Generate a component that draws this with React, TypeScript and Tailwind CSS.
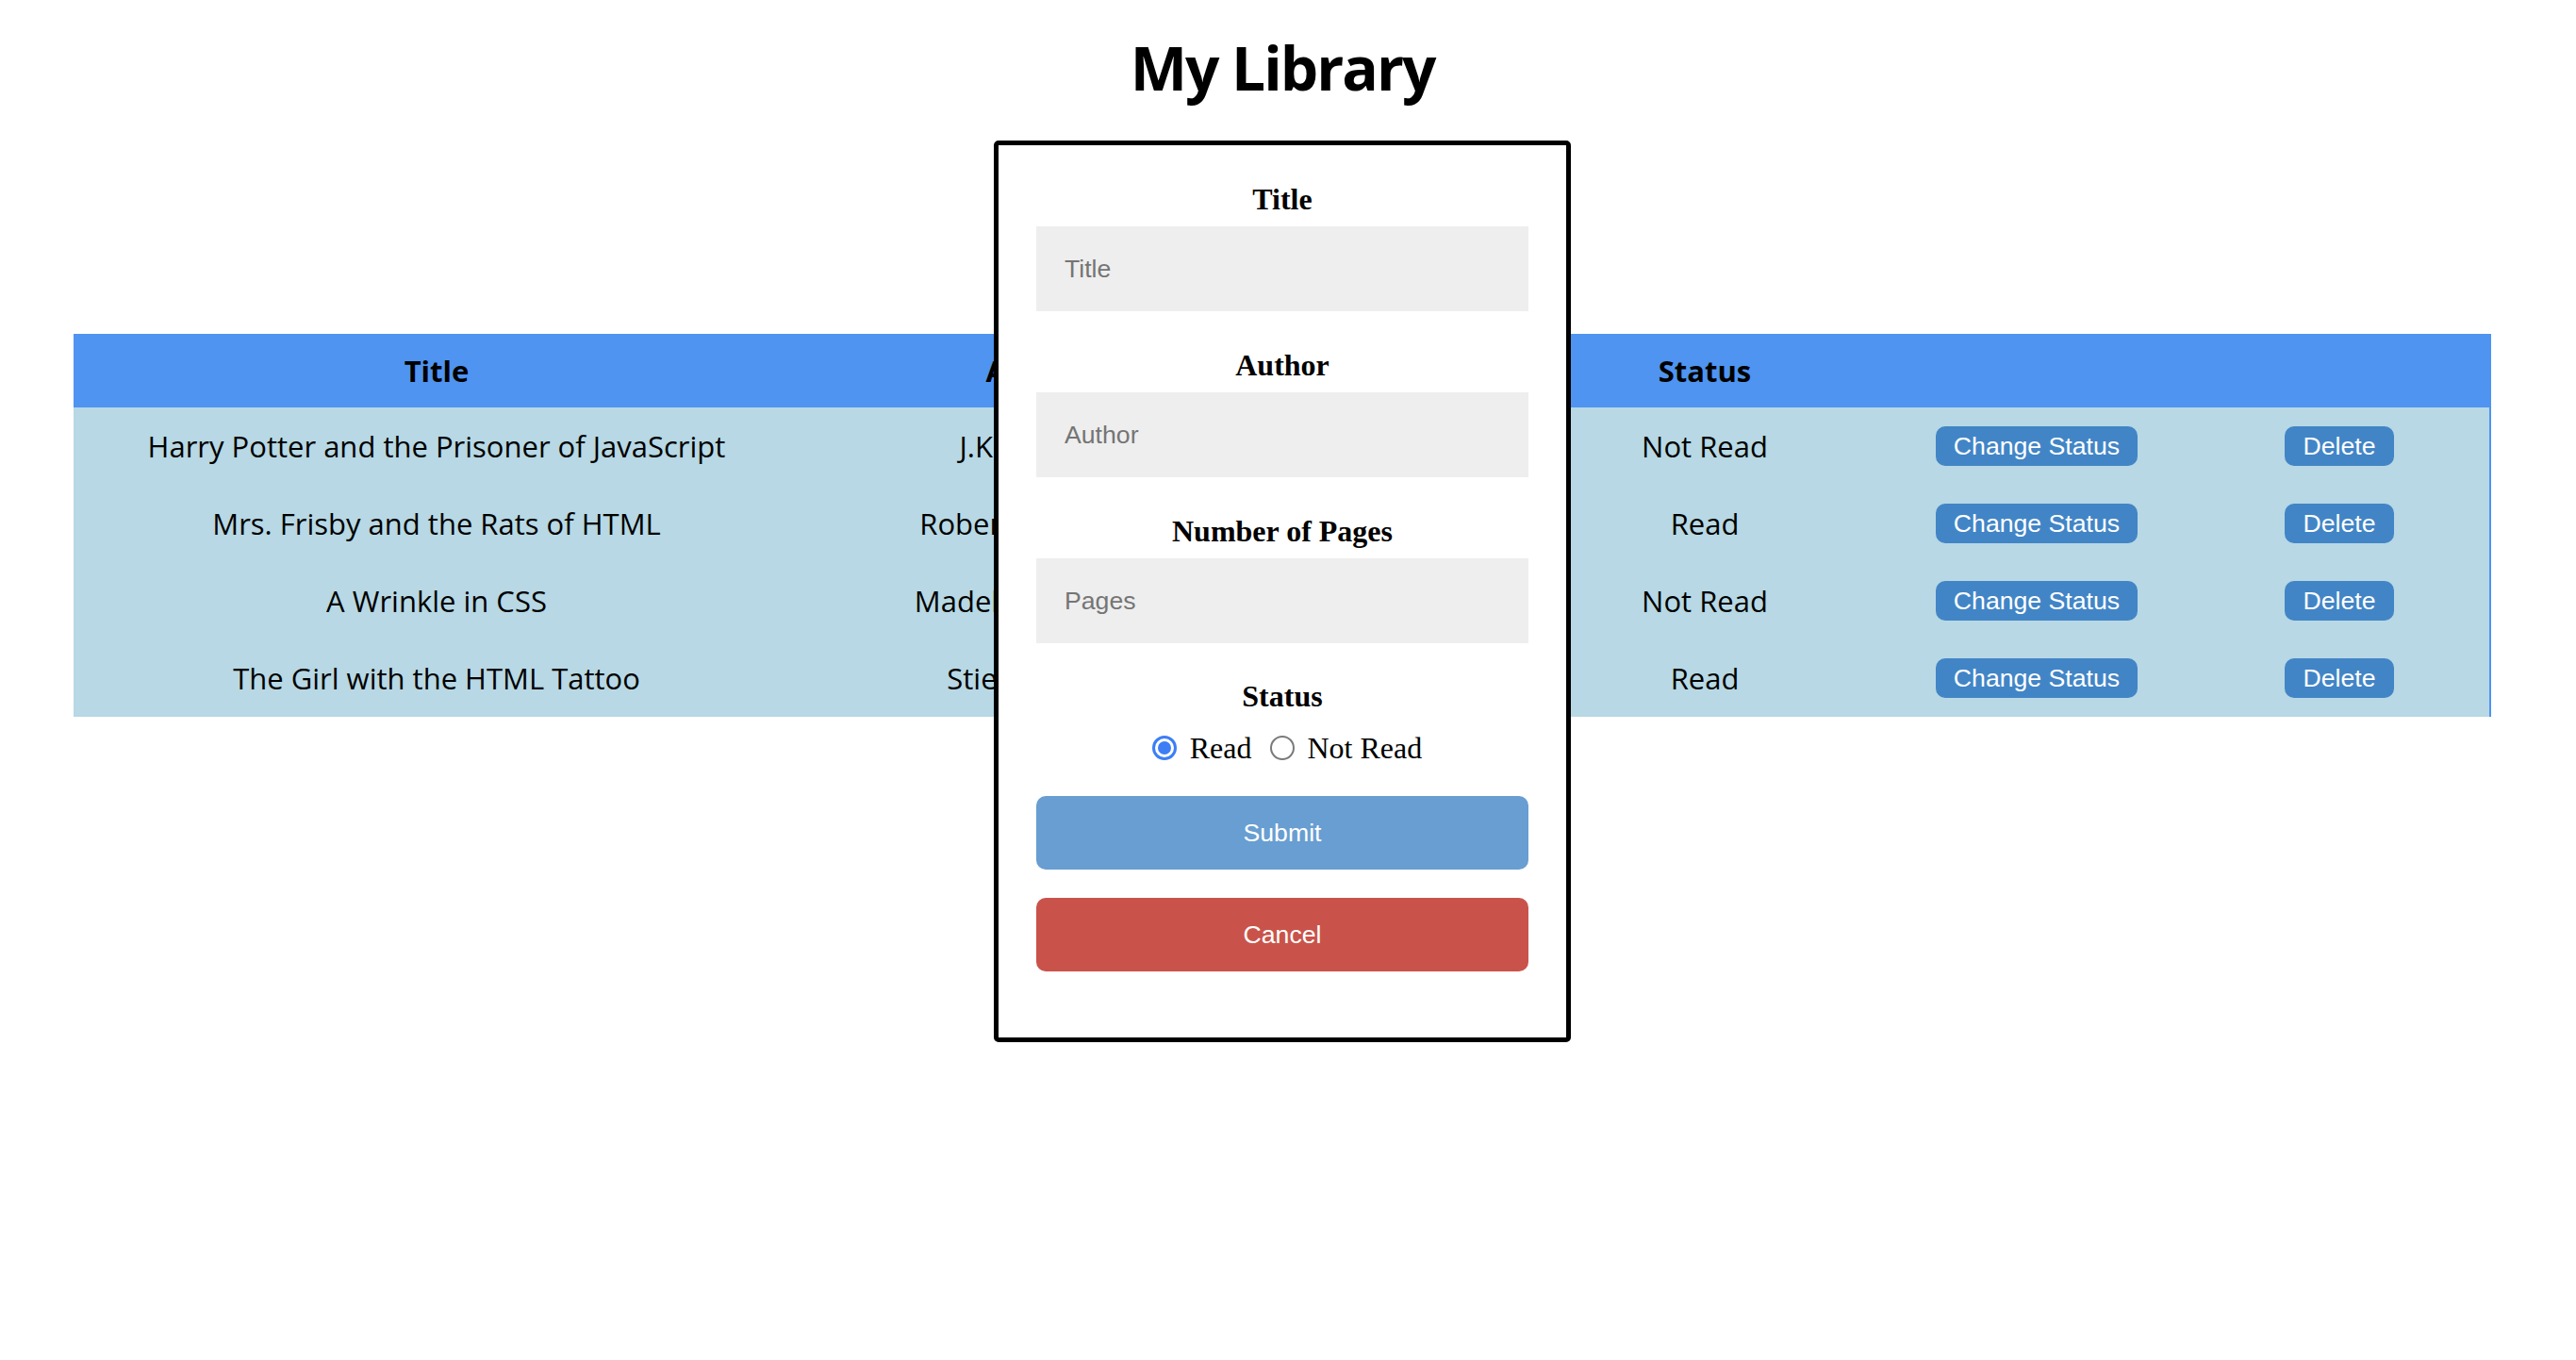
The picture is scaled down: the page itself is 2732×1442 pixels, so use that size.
import { useState } from 'react'

type Book = {
  title: string
  author: string
  pages: number
  read: boolean
}

const initialBooks: Book[] = [
  { title: 'Harry Potter and the Prisoner of JavaScript', author: 'J.K. Rowling', pages: 435, read: false },
  { title: 'Mrs. Frisby and the Rats of HTML', author: "Robert C. O'Brien", pages: 233, read: true },
  { title: 'A Wrinkle in CSS', author: "Madeleine L'Engle", pages: 256, read: false },
  { title: 'The Girl with the HTML Tattoo', author: 'Stieg Larsson', pages: 465, read: true },
]

const cols = 'grid grid-cols-[770px_504px_264px_384px_320px_322px]'

const RowButton = ({ label }: { label: string }) => (
  <button className="h-[42px] px-[19px] rounded-[10px] bg-[#4285c6] text-white text-[26.67px] font-['Liberation_Sans',Arial,sans-serif] leading-none">
    {label}
  </button>
)

const Field = ({ label, placeholder }: { label: string; placeholder: string }) => (
  <div className="flex flex-col items-center">
    <label className="text-[32px] leading-[38px] font-bold">{label}</label>
    <input
      placeholder={placeholder}
      className="mt-[10px] w-full h-[90px] bg-[#eeeeee] pl-[30px] text-[26.67px] font-['Liberation_Sans',Arial,sans-serif] placeholder:text-[#757575] outline-none"
    />
  </div>
)

const Radio = ({ checked }: { checked: boolean }) =>
  checked ? (
    <span className="w-[26px] h-[26px] rounded-full border-[3px] border-[#3d7ef6] flex items-center justify-center">
      <span className="w-[14px] h-[14px] rounded-full bg-[#3d7ef6]" />
    </span>
  ) : (
    <span className="w-[26px] h-[26px] rounded-full border-[2px] border-[#7a7a7a]" />
  )

export default function App() {
  const [books] = useState<Book[]>(initialBooks)
  const [readChoice, setReadChoice] = useState(true)

  return (
    <div className="relative w-[2720px] min-h-[1442px] bg-white text-black font-['Open_Sans',sans-serif]">
      <h1 className="pt-[40px] h-[104px] text-center text-[64px] leading-none font-bold tracking-[-2px]">
        My Library
      </h1>

      {/* table */}
      <div className="mt-[250px] mx-[78px] text-[31px]">
        <div className={`${cols} h-[78px] bg-[#4e94f0] font-bold`}>
          {['Title', 'Author', 'Pages', 'Status', '', ''].map((h, i) => (
            <div key={i} className="flex items-center justify-center">{h}</div>
          ))}
        </div>
        <div className="bg-[#b7d8e4] border-r-2 border-[#4e94f0]">
          {books.map((b) => (
            <div key={b.title} className={`${cols} h-[82px]`}>
              <div className="flex items-center justify-center">{b.title}</div>
              <div className="flex items-center justify-center">{b.author}</div>
              <div className="flex items-center justify-center">{b.pages}</div>
              <div className="flex items-center justify-center">{b.read ? 'Read' : 'Not Read'}</div>
              <div className="flex items-center justify-center"><RowButton label="Change Status" /></div>
              <div className="flex items-center justify-center"><RowButton label="Delete" /></div>
            </div>
          ))}
        </div>
      </div>

      {/* add book form */}
      <form className="absolute z-10 top-[149px] left-1/2 -translate-x-1/2 w-[612px] h-[956px] border-[5px] border-black rounded-[5px] bg-white px-[40px] pt-[38px] flex flex-col font-['Liberation_Serif',serif]">
        <div className="flex flex-col gap-[38px]">
          <Field label="Title" placeholder="Title" />
          <Field label="Author" placeholder="Author" />
          <Field label="Number of Pages" placeholder="Pages" />
        </div>
        <div className="mt-[37px] flex flex-col items-center">
          <span className="text-[32px] leading-[38px] font-bold">Status</span>
          <div className="mt-[17px] h-[38px] pl-[10px] flex items-center text-[32px] leading-[38px]">
            <button type="button" onClick={() => setReadChoice(true)} className="flex items-center">
              <Radio checked={readChoice} />
              <span className="ml-[14px]">Read</span>
            </button>
            <button type="button" onClick={() => setReadChoice(false)} className="ml-[19px] flex items-center">
              <Radio checked={!readChoice} />
              <span className="ml-[14px]">Not Read</span>
            </button>
          </div>
        </div>
        <button type="button" className="mt-[32px] h-[78px] w-full rounded-[10px] bg-[#689ed1] text-white text-[26.67px] font-['Liberation_Sans',Arial,sans-serif]">
          Submit
        </button>
        <button type="button" className="mt-[30px] h-[78px] w-full rounded-[10px] bg-[#c9534a] text-white text-[26.67px] font-['Liberation_Sans',Arial,sans-serif]">
          Cancel
        </button>
      </form>
    </div>
  )
}
